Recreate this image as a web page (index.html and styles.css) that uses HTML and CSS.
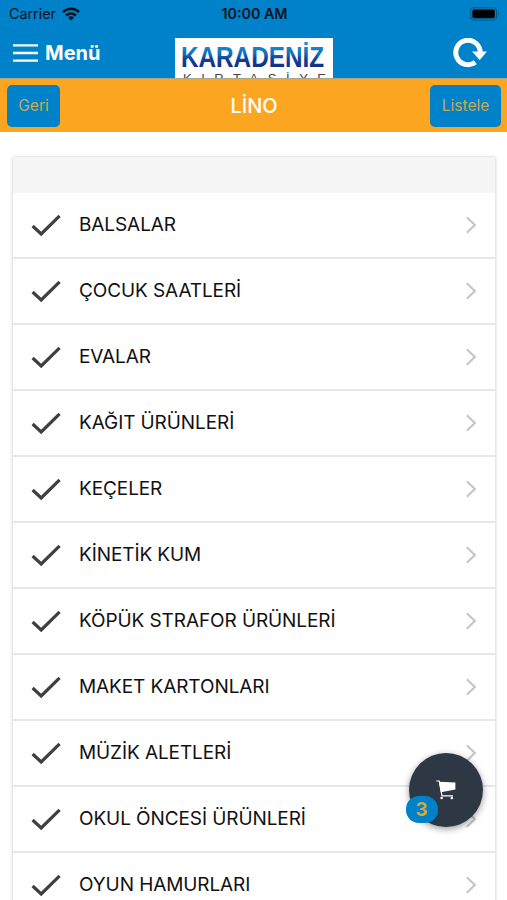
FILE: index.html
```
<!DOCTYPE html>
<html lang="tr">
<head>
  <meta charset="UTF-8" />
  <meta name="viewport" content="width=device-width, initial-scale=1.0"/>
  <title>Karadeniz Kırtasiye</title>
  <link rel="stylesheet" href="styles.css">
</head>
<body>
  <svg class="symbols" width="0" height="0">
    <symbol id="check" viewBox="0 0 30 24"><path d="M1.6 13 L10.2 21 L28.6 2.8" fill="none" stroke="#404040" stroke-width="3.2"/></symbol>
    <symbol id="chevron" viewBox="0 0 12 18"><path d="M1.8 1.2 L9.8 9 L1.8 16.8" fill="none" stroke="#c7c7c7" stroke-width="2.3"/></symbol>
  </svg>

  <header class="top">
    <div class="statusbar">
      <div class="carrier">
        <span>Carrier</span>
        <svg class="wifi" viewBox="0 0 18 14">
          <g fill="none" stroke="#07121c" stroke-width="2.5">
            <path d="M1 5.1 a11.4 11.4 0 0 1 16 0"/>
            <path d="M4 8.5 a7.2 7.2 0 0 1 10 0"/>
          </g>
          <path d="M9 13.6 L5.9 10.5 a4.4 4.4 0 0 1 6.2 0 Z" fill="#07121c"/>
        </svg>
      </div>
      <span class="clock">10:00 AM</span>
      <svg class="battery" viewBox="0 0 30 14">
        <rect x="0.6" y="0.6" width="26" height="12.4" rx="3.6" fill="none" stroke="#045a8c" stroke-width="1.2"/>
        <rect x="2.4" y="2.4" width="22.4" height="8.8" rx="1.8" fill="#000"/>
        <path d="M28 4.8 q1.8 2 0 4 Z" fill="#045a8c"/>
      </svg>
    </div>
    <nav class="navbar">
      <button class="menu">
        <svg class="bars" viewBox="0 0 25 18"><path d="M0 1.4 H25 M0 9 H25 M0 16.6 H25" stroke="#fff" stroke-width="2.4"/></svg>
        <span>Menü</span>
      </button>
      <svg class="logo" viewBox="0 0 158 40">
        <defs>
          <linearGradient id="ink" gradientUnits="userSpaceOnUse" x1="0" y1="5" x2="0" y2="29">
            <stop offset="0" stop-color="#1595d8"/>
            <stop offset="0.45" stop-color="#0f70bd"/>
            <stop offset="0.65" stop-color="#11429a"/>
            <stop offset="1" stop-color="#122f86"/>
          </linearGradient>
        </defs>
        <rect width="158" height="41" fill="#fff"/>
        <text class="brand" x="6" y="28.5" textLength="143" lengthAdjust="spacingAndGlyphs">KARADENİZ</text>
        <text class="brand-sub" x="8" y="44.5" textLength="143">KIRTASİYE</text>
      </svg>
      <button class="reload">
        <svg viewBox="0 0 34 30">
          <path d="M22.3 24.3 A12.2 12.2 0 1 1 27.2 14.2" fill="none" stroke="#fff" stroke-width="5"/>
          <path d="M19 13.6 H34 L26.7 22 Z" fill="#fff"/>
        </svg>
      </button>
    </nav>
  </header>

  <div class="subheader">
    <button class="btn">Geri</button>
    <h1>LİNO</h1>
    <button class="btn btn-list">Listele</button>
  </div>

  <main class="card">
    <div class="card-head"></div>
    <ul class="list">
      <li><svg class="check"><use href="#check"/></svg><span>BALSALAR</span><svg class="chevron"><use href="#chevron"/></svg></li>
      <li><svg class="check"><use href="#check"/></svg><span>ÇOCUK SAATLERİ</span><svg class="chevron"><use href="#chevron"/></svg></li>
      <li><svg class="check"><use href="#check"/></svg><span>EVALAR</span><svg class="chevron"><use href="#chevron"/></svg></li>
      <li><svg class="check"><use href="#check"/></svg><span>KAĞIT ÜRÜNLERİ</span><svg class="chevron"><use href="#chevron"/></svg></li>
      <li><svg class="check"><use href="#check"/></svg><span>KEÇELER</span><svg class="chevron"><use href="#chevron"/></svg></li>
      <li><svg class="check"><use href="#check"/></svg><span>KİNETİK KUM</span><svg class="chevron"><use href="#chevron"/></svg></li>
      <li><svg class="check"><use href="#check"/></svg><span>KÖPÜK STRAFOR ÜRÜNLERİ</span><svg class="chevron"><use href="#chevron"/></svg></li>
      <li><svg class="check"><use href="#check"/></svg><span>MAKET KARTONLARI</span><svg class="chevron"><use href="#chevron"/></svg></li>
      <li><svg class="check"><use href="#check"/></svg><span>MÜZİK ALETLERİ</span><svg class="chevron"><use href="#chevron"/></svg></li>
      <li><svg class="check"><use href="#check"/></svg><span>OKUL ÖNCESİ ÜRÜNLERİ</span><svg class="chevron"><use href="#chevron"/></svg></li>
      <li><svg class="check"><use href="#check"/></svg><span>OYUN HAMURLARI</span><svg class="chevron"><use href="#chevron"/></svg></li>
    </ul>
  </main>

  <button class="cart">
    <svg viewBox="0 0 20 20">
      <path d="M0.3 1 H3.2 L6 15.8 H17" fill="none" stroke="#fff" stroke-width="1.2"/>
      <path d="M3 1.8 L19.4 2.4 V9.6 L4.8 12.2 Z" fill="#fff"/>
      <circle cx="5.6" cy="18" r="1.3" fill="#fff"/>
      <circle cx="15.8" cy="18" r="1.3" fill="#fff"/>
    </svg>
    <span class="badge">3</span>
  </button>
</body>
</html>
```
FILE: styles.css
```
:root {
  --blue: #0082ca;
  --orange: #fca521;
  --dark: #2e3744;
}

* {
  box-sizing: border-box;
}

body {
  margin: 0;
  height: 900px;
  overflow: hidden;
  font-family: Inter, "Liberation Sans", sans-serif;
  background: #fff;
  color: #111;
}

button {
  border: none;
  padding: 0;
  background: none;
  font-family: inherit;
  cursor: pointer;
}

svg {
  display: block;
  flex: none;
}

.symbols {
  position: absolute;
}

/* header */
.top {
  height: 79px;
  background: var(--blue);
  border-bottom: 1px solid #a9a78a;
}

.statusbar {
  height: 27px;
  padding: 0 7px 0 9px;
  display: grid;
  grid-template-columns: 1fr auto 1fr;
  align-items: center;
  color: #07121c;
  font-size: 14.3px;
}

.carrier {
  display: flex;
  align-items: center;
  gap: 6px;
}

.wifi {
  width: 18px;
  height: 14px;
}

.clock {
  font-weight: 600;
}

.battery {
  width: 30px;
  height: 14px;
  justify-self: end;
}

.navbar {
  height: 51px;
  padding: 0 20px 0 13px;
  display: grid;
  grid-template-columns: 162px 158px 1fr;
  align-items: center;
}

.menu {
  display: flex;
  align-items: center;
  gap: 7px;
  color: #fff;
  font-size: 20px;
  font-weight: 700;
}

.bars {
  width: 25px;
  height: 18px;
}

.logo {
  width: 158px;
  height: 40px;
  align-self: end;
}

.brand {
  font: 700 30px "Liberation Sans", sans-serif;
  fill: url(#ink);
}

.brand-sub {
  font: 400 13px "Liberation Sans", sans-serif;
  fill: #444;
}

.reload {
  justify-self: end;
}

.reload svg {
  width: 34px;
  height: 30px;
}

/* page title */
.subheader {
  height: 53px;
  padding: 0 6px 0 7px;
  display: grid;
  grid-template-columns: 1fr auto 1fr;
  align-items: center;
  background: var(--orange);
}

.subheader h1 {
  margin: 0;
  color: #fff;
  font-size: 20px;
  font-weight: 500;
}

.btn {
  width: 53px;
  height: 42px;
  border-radius: 5px;
  background: var(--blue);
  color: #c9a94c;
  font-size: 15.5px;
}

.btn-list {
  width: 71px;
  justify-self: end;
}

/* categories */
.card {
  margin: 24px 11px 0 12px;
  border: 1px solid #e8e8e8;
  border-radius: 3px 3px 0 0;
  box-shadow: 0 1px 3px rgba(0, 0, 0, 0.15);
}

.card-head {
  height: 36px;
  background: #f5f5f5;
}

.list {
  margin: 0;
  padding: 0;
  list-style: none;
}

.list li {
  height: 66px;
  padding: 0 18px;
  display: flex;
  align-items: center;
  border-bottom: 2px solid #e7e7e7;
}

.list span {
  flex: 1;
  margin-left: 18px;
  padding-bottom: 2px;
  font-size: 19px;
  letter-spacing: -0.09px;
  white-space: nowrap;
}

.check {
  width: 30px;
  height: 24px;
}

.chevron {
  width: 12px;
  height: 18px;
}

/* floating cart */
.cart {
  position: fixed;
  left: 409px;
  top: 753px;
  width: 74px;
  height: 74px;
  display: flex;
  align-items: center;
  justify-content: center;
  border-radius: 50%;
  background: var(--dark);
  box-shadow: 0 2px 7px rgba(0, 0, 0, 0.4);
}

.cart svg {
  width: 20px;
  height: 20px;
}

.badge {
  position: absolute;
  left: -3px;
  top: 43px;
  width: 32px;
  height: 27px;
  border-radius: 13px;
  background: var(--blue);
  color: #d9a83c;
  font-size: 19px;
  font-weight: 700;
  line-height: 27px;
}
```
